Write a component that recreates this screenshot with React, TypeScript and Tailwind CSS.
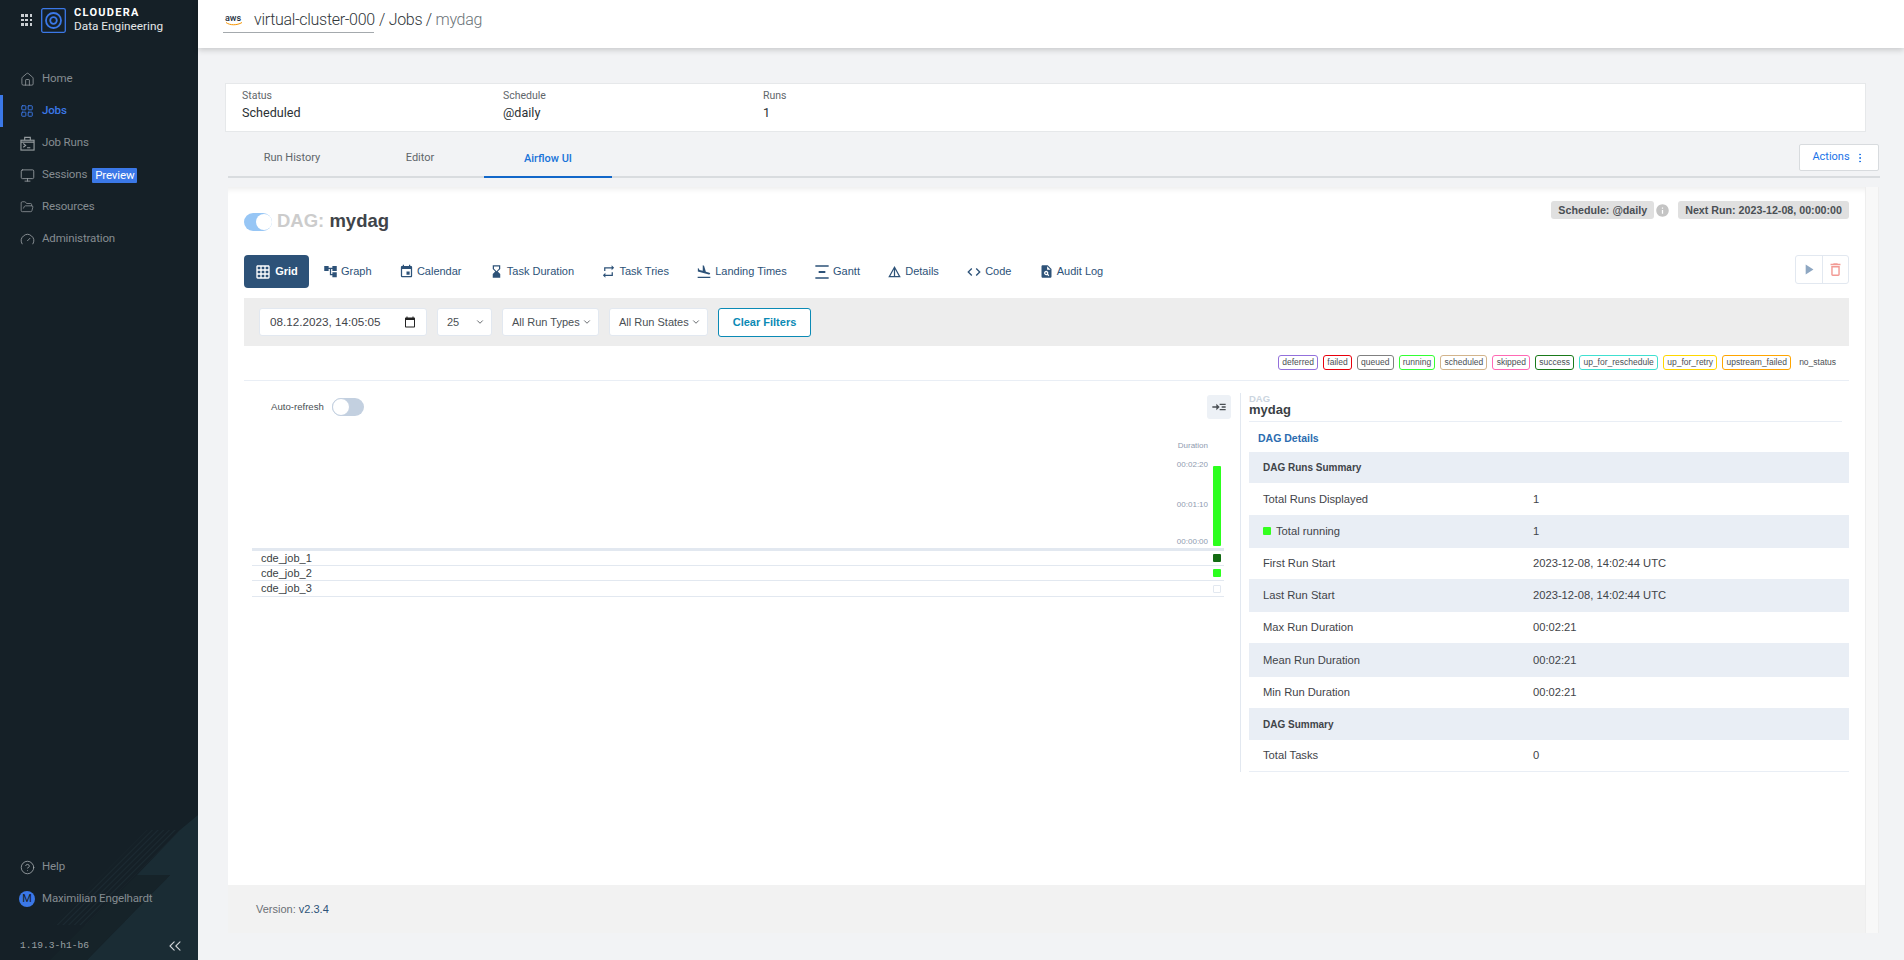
import React from "react";
import { House, LayoutGrid, Monitor, FolderOpen, Gauge, CircleHelp, ChevronsLeft, ChevronDown, MoreVertical } from "lucide-react";
import { MdGridOn, MdAccountTree, MdEvent, MdHourglassBottom, MdRepeat, MdFlightLand, MdVerticalDistribute, MdDetails, MdCode, MdPlagiarism, MdPlayArrow, MdDeleteOutline, MdInfo, MdReadMore, MdCalendarToday } from "react-icons/md";

const JobRunsIcon = () => (
  <svg width="15" height="15" viewBox="0 0 16 16" fill="none" stroke="currentColor" strokeWidth="1.2">
    <rect x="1" y="4.500" width="14" height="10.500" />
    <path d="M5 4.500V1.500h6v3M3.500 8l2.500 2-2.500 2M7.500 12.500H11M1 6.500h14" />
  </svg>
);

const nav = [
  { label: "Home", icon: <House size={15} strokeWidth={1.3} /> },
  { label: "Jobs", icon: <LayoutGrid size={14} strokeWidth={1.6} />, active: true },
  { label: "Job Runs", icon: <JobRunsIcon /> },
  { label: "Sessions", icon: <Monitor size={15} strokeWidth={1.4} />, badge: "Preview" },
  { label: "Resources", icon: <FolderOpen size={14} strokeWidth={1.3} /> },
  { label: "Administration", icon: <Gauge size={15} strokeWidth={1.4} /> },
];

const Sidebar = () => (
  <aside className="relative w-[198px] h-[960px] shrink-0 bg-[#152027] flex flex-col overflow-hidden font-['Roboto',sans-serif]">
    <svg className="absolute left-0 bottom-0" width="198" height="148" viewBox="0 0 198 148">
      <defs>
        <pattern id="hatch" width="4" height="4" patternUnits="userSpaceOnUse" patternTransform="rotate(45)">
          <line x1="0" y1="0" x2="0" y2="4" stroke="#22333b" strokeWidth="1" />
        </pattern>
      </defs>
      <polygon points="198,3 198,148 87,148 170,63 137,63 180,18" fill="#1a2c34" />
      <polygon points="137,63 170,63 87,148 50,148 85,113" fill="#162329" />
      <polygon points="147,18 180,18 85,113 53,113" fill="url(#hatch)" />
    </svg>
    <div className="relative flex items-center h-[40px]">
      <div className="ml-[21px] grid grid-cols-3 gap-[2px] w-[11px]">
        {Array.from({ length: 9 }).map((_, i) => <span key={i} className="w-[2.500px] h-[2.500px] bg-[#c9ced2]" />)}
      </div>
      <svg className="ml-[9px]" width="25" height="25" viewBox="0 0 25 25" fill="none" stroke="#3b78e7">
        <rect x="0.700" y="0.700" width="23.600" height="23.600" rx="1.500" strokeWidth="1.300" />
        <circle cx="12.500" cy="12.500" r="7.500" strokeWidth="1.800" />
        <circle cx="12.500" cy="12.500" r="3.300" strokeWidth="1.800" />
      </svg>
      <div className="ml-[8px] leading-none">
        <div className="text-[11px] font-bold tracking-[1.300px] text-white">CLOUDERA</div>
        <div className="text-[11.800px] mt-[3px] text-[#e4e7e9]">Data Engineering</div>
      </div>
    </div>
    <nav className="relative mt-[23px] flex flex-col">
      {nav.map((n) => (
        <div key={n.label} className={`h-[32px] flex items-center border-l-[3px] pl-[17px] text-[11.500px] tracking-[-0.150px] ${n.active ? "border-[#3b78e7] text-[#3b78e7] font-medium" : "border-transparent text-[#858c91]"}`}>
          <span className={`w-[22px] ${n.active ? "text-[#3b78e7]" : "text-[#969ca0]"}`}>{n.icon}</span>
          <span>{n.label}</span>
          {n.badge && <span className="ml-[5px] bg-[#3b78e7] text-white px-[3px] h-[15px] leading-[15px] rounded-[1px] text-[11.500px]">{n.badge}</span>}
        </div>
      ))}
    </nav>
    <div className="relative mt-auto flex flex-col text-[11.500px] tracking-[-0.150px] text-[#858c91]">
      <div className="h-[32px] flex items-center pl-[20px]">
        <span className="w-[22px] text-[#a5abaf]"><CircleHelp size={15} strokeWidth={1.3} /></span>Help
      </div>
      <div className="h-[32px] flex items-center pl-[19px]">
        <span className="w-[16px] h-[16px] rounded-full bg-[#3b78e7] text-[#152027] text-[11px] text-center leading-[16px] mr-[7px]">M</span>Maximilian Engelhardt
      </div>
      <div className="h-[45px] flex items-center justify-between pl-[20px] pr-[13px] pt-[17px]">
        <span className="text-[9.600px] tracking-normal text-[#9aa0a4] font-['Liberation_Mono',monospace]">1.19.3-h1-b6</span>
        <ChevronsLeft size={20} strokeWidth={1.3} className="text-[#d0d3d6]" />
      </div>
    </div>
  </aside>
);

const Header = () => (
  <header className="h-[48px] shrink-0 bg-white shadow-[0_2px_6px_rgba(0,0,0,0.18)] flex items-start pl-[25px] font-['Roboto',sans-serif] relative text-[16px] font-light tracking-[-0.300px] whitespace-nowrap">
    <div className="flex items-center border-b border-[#a4a9ad] h-[33px] w-[151px] pt-[7px]">
      <div className="w-[31px] shrink-0 flex flex-col items-start pl-[2px] leading-none">
        <span className="text-[9px] font-medium text-[#232f3e] leading-[8px] tracking-normal">aws</span>
        <svg width="18" height="4" viewBox="0 0 18 4"><path d="M1 0.500C5 3.500 12 3.500 17 0.500" stroke="#f79400" fill="none" strokeWidth="1" /></svg>
      </div>
      <span className="text-[#30363a]">virtual-cluster-000</span>
    </div>
    <div className="h-[33px] leading-[40px] ml-[5px] whitespace-pre">
      <span className="text-[#30363a]">/ Jobs /</span> <span className="text-[#6b7378]">mydag</span>
    </div>
  </header>
);

const StatusCard = () => (
  <div className="ml-[27px] mt-[35px] w-[1641px] h-[49px] bg-white border border-[#e6e8ea] flex pl-[16px] pt-[4px] font-['Roboto',sans-serif]">
    {[["Status", "Scheduled", 261], ["Schedule", "@daily", 260], ["Runs", "1", 200]].map(([a, b, w]) => (
      <div key={a as string} style={{ width: w as number }}>
        <div className="text-[10.500px] leading-[15px] text-[#5f666b]">{a}</div>
        <div className="text-[12.600px] leading-[18px] mt-[1px] text-[#2b3135]">{b}</div>
      </div>
    ))}
  </div>
);

const Tabs = () => (
  <div className="ml-[30px] mt-[4px] w-[1652px] h-[42px] border-b-2 border-[#d9dcdf] flex items-center font-['Roboto',sans-serif] text-[11px] text-[#5f666b]">
    <span className="w-[128px] text-center mt-[4px]">Run History</span>
    <span className="w-[128px] text-center mt-[4px]">Editor</span>
    <span className="w-[128px] h-[42px] leading-[45px] text-center text-[#1a73d9] font-medium border-b-[2px] border-[#1267c9] -mb-[2px]">Airflow UI</span>
    <button className="ml-auto mr-[1px] w-[80px] h-[27px] bg-white border border-[#d8dbde] rounded-[2px] text-[#1a73e8] flex items-center justify-center mt-[3px]">
      Actions <MoreVertical size={12} className="ml-[4px]" />
    </button>
  </div>
);

const tabs: [React.ReactNode, string][] = [
  [<MdAccountTree size={15} />, "Graph"],
  [<MdEvent size={15} />, "Calendar"],
  [<MdHourglassBottom size={15} />, "Task Duration"],
  [<MdRepeat size={15} />, "Task Tries"],
  [<MdFlightLand size={16} />, "Landing Times"],
  [<MdVerticalDistribute size={16} />, "Gantt"],
  [<MdDetails size={15} />, "Details"],
  [<MdCode size={16} />, "Code"],
  [<MdPlagiarism size={15} />, "Audit Log"],
];

const legend = [
  ["deferred", "border-[#9370db]"], ["failed", "border-[#e8000d]"], ["queued", "border-[#808080]"], ["running", "border-[#33ff33]"],
  ["scheduled", "border-[#d2b48c]"], ["skipped", "border-[#ff69b4]"], ["success", "border-[#1a7a1a]"], ["up_for_reschedule", "border-[#40e0d0]"],
  ["up_for_retry", "border-[#ffd700]"], ["upstream_failed", "border-[#ffa500]"],
];

const Select = ({ label, w }: { label: string; w: string }) => (
  <div className={`${w} h-[28px] bg-white border border-[#e2e8f0] rounded-[3px] flex items-center justify-between pl-[9px] pr-[6px] text-[11px] text-[#4a4f54] whitespace-nowrap`}>
    <span>{label}</span><ChevronDown size={10} strokeWidth={2} />
  </div>
);

const rows: [React.ReactNode, string, string, boolean?][] = [
  ["DAG Runs Summary", "", "h-[31px] bg-[#e9eef5]", true],
  ["Total Runs Displayed", "1", "h-[32px]"],
  [<span className="flex items-center"><span className="w-[8px] h-[8px] rounded-[1px] bg-[#33ff1f] mr-[5px]" />Total running</span>, "1", "h-[33px] bg-[#e9eef5]"],
  ["First Run Start", "2023-12-08, 14:02:44 UTC", "h-[31px]"],
  ["Last Run Start", "2023-12-08, 14:02:44 UTC", "h-[33px] bg-[#e9eef5]"],
  ["Max Run Duration", "00:02:21", "h-[31px]"],
  ["Mean Run Duration", "00:02:21", "h-[34px] bg-[#e9eef5]"],
  ["Min Run Duration", "00:02:21", "h-[31px]"],
  ["DAG Summary", "", "h-[32px] bg-[#e9eef5]", true],
  ["Total Tasks", "0", "h-[32px] border-b border-[#e9eef5]"],
];

const GridPane = () => (
  <div className="w-[972px] ml-[8px] flex flex-col pt-[14px]">
    <div className="flex items-center h-[24px]">
      <span className="ml-[19px] text-[9.600px] text-[#4a4f54]">Auto-refresh</span>
      <span className="ml-[8px] w-[32px] h-[18px] rounded-full bg-[#c3d0e0] relative">
        <span className="absolute left-0 top-0 w-[18px] h-[18px] rounded-full bg-white border border-[#c3d0e0]" />
      </span>
      <button className="ml-auto mr-[-7px] w-[24px] h-[24px] rounded-[3px] bg-[#edf1f6] flex items-center justify-center text-[#4a4f54]"><MdReadMore size={16} /></button>
    </div>
    <div className="h-[129px] flex justify-end items-end pr-[3px]">
      <div className="flex flex-col items-end mr-[5px] text-[8px] text-[#8f9bb0]">
        <span className="leading-[12px]">Duration</span>
        <span className="mt-[7px] leading-[12px]">00:02:20</span>
        <span className="mt-[28px] leading-[12px]">00:01:10</span>
        <span className="mt-[25px] leading-[12px]">00:00:00</span>
      </div>
      <div className="w-[8px] h-[80px] bg-[#2cff1e] rounded-[1px] mb-[2px]" />
    </div>
    <div className="border-t-[3px] border-[#e2e8f0]">
      {[["cde_job_1", "bg-[#136b13]", "h-[15px]"], ["cde_job_2", "bg-[#2cff1e]", "h-[15px]"], ["cde_job_3", "bg-white border border-[#e2e8f0]", "h-[16px]"]].map(([name, cls, h]) => (
        <div key={name} className={`${h} border-b border-[#e2e8f0] flex items-center justify-between pl-[9px] pr-[3px] text-[11px] text-[#3a3f44]`}>
          <span>{name}</span><span className={`w-[8px] h-[8px] rounded-[1px] ${cls}`} />
        </div>
      ))}
    </div>
  </div>
);

const DetailPane = () => (
  <div className="ml-[16px] flex">
    <div className="w-px bg-[#e2e8f0] h-[379px] mt-[12px]" />
    <div className="ml-[8px] w-[600px] pt-[13px]">
      <div className="h-[28px] border-b border-[#e9eef5] mr-[7px]">
        <div className="text-[9.500px] font-bold text-[#cbd5e0] leading-[9px]">DAG</div>
        <div className="text-[13px] font-bold text-[#3a3f44] leading-[14px]">mydag</div>
      </div>
      <div className="h-[30px] pl-[9px] pt-[3px] flex items-center text-[10.500px] font-bold text-[#2b6cb0]">DAG Details</div>
      <div className="text-[11.200px] text-[#3f4449]">
        {rows.map(([a, b, cls, head], i) => (
          <div key={i} className={`flex items-center pl-[14px] ${cls}`}>
            <span className={`w-[270px] ${head ? "font-bold text-[10px]" : ""}`}>{a}</span>
            <span>{b}</span>
          </div>
        ))}
      </div>
    </div>
  </div>
);

const AirflowPanel = () => (
  <div className="ml-[30px] mt-[9px] w-[1651px] flex font-['Liberation_Sans',sans-serif]">
    <div className="w-[1637px] h-[746px] flex flex-col bg-[#f2f2f2]">
      <div className="h-[698px] bg-white shadow-[inset_0_7px_6px_-5px_rgba(0,0,0,0.08)] px-[16px] flex flex-col">
        <div className="h-[68px] flex items-start shrink-0">
          <span className="mt-[26px] w-[28px] h-[18px] rounded-full bg-[#97c6f5] relative shrink-0">
            <span className="absolute right-0 top-[1px] w-[16px] h-[16px] rounded-full bg-white" />
          </span>
          <h1 className="mt-[20px] ml-[5px] text-[18.500px] leading-[28px] font-bold text-[#3f4449]"><span className="text-[#cccccc]">DAG:</span> mydag</h1>
          <div className="ml-auto mt-[14px] flex items-center text-[10.700px] font-bold text-[#4a4f54]">
            <span className="h-[18px] leading-[18px] px-[7px] bg-[#e0e0e0] rounded-[3px]">Schedule: @daily</span>
            <MdInfo size={15} className="text-[#c4c4c4] ml-[1px] mr-[8px]" />
            <span className="h-[18px] leading-[18px] px-[7px] bg-[#e0e0e0] rounded-[3px]">Next Run: 2023-12-08, 00:00:00</span>
          </div>
        </div>
        <div className="h-[33px] flex items-center text-[11px] text-[#2d5278] shrink-0">
          <div className="w-[65px] h-[33px] rounded-[4px] bg-[#2d5278] text-white font-bold flex items-center justify-center gap-[4px]"><MdGridOn size={16} />Grid</div>
          <div className="flex items-center pl-[14px] gap-[27.300px]">
            {tabs.map(([ic, label]) => (
              <span key={label} className="flex items-center gap-[3px] whitespace-nowrap">{ic}{label}</span>
            ))}
          </div>
          <div className="ml-auto flex self-start h-[29px] w-[54px] border border-[#e2e8f0] rounded-[3px]">
            <span className="flex-1 flex items-center justify-center text-[#8ea7c2] border-r border-[#e2e8f0]"><MdPlayArrow size={17} /></span>
            <span className="flex-1 flex items-center justify-center text-[#f29a94]"><MdDeleteOutline size={17} /></span>
          </div>
        </div>
        <div className="mt-[10px] h-[48px] bg-[#ededed] flex items-center pl-[15px] gap-[10px] shrink-0">
          <div className="w-[168px] h-[28px] bg-white border border-[#e2e8f0] rounded-[3px] flex items-center justify-between pl-[10px] pr-[10px] text-[11.700px] text-[#3f4449]">
            <span>08.12.2023, 14:05:05</span><MdCalendarToday size={12} className="text-[#222]" />
          </div>
          <Select label="25" w="w-[55px]" />
          <Select label="All Run Types" w="w-[97px]" />
          <Select label="All Run States" w="w-[99px]" />
          <button className="w-[93px] h-[29px] bg-white border border-[#0b8ab5] rounded-[3px] text-[11px] font-bold text-[#0b8ab5]">Clear Filters</button>
        </div>
        <div className="h-[35px] border-b border-[#e9eef5] flex items-start justify-end pt-[9px] gap-[5px] pr-[13px] text-[8.500px] text-[#4a4f54] shrink-0">
          {legend.map(([t, c]) => (
            <span key={t} className={`h-[15px] leading-[13px] px-[3.200px] border rounded-[3px] ${c}`}>{t}</span>
          ))}
          <span className="ml-[3px] h-[15px] leading-[15px]">no_status</span>
        </div>
        <div className="flex">
          <GridPane />
          <DetailPane />
        </div>
      </div>
      <div className="flex-1 flex items-center pl-[28px] text-[11px] text-[#6b7075]">Version:&nbsp;<span className="text-[#2d5278]">v2.3.4</span></div>
    </div>
    <div className="flex-1 bg-[#f8f8f8] border-x border-[#eeeeee]" />
  </div>
);

export default function App() {
  return (
    <div className="flex h-[960px] w-[1904px] overflow-hidden bg-[#f2f3f5]">
      <Sidebar />
      <main className="flex-1 flex flex-col">
        <Header />
        <StatusCard />
        <Tabs />
        <AirflowPanel />
      </main>
    </div>
  );
}
